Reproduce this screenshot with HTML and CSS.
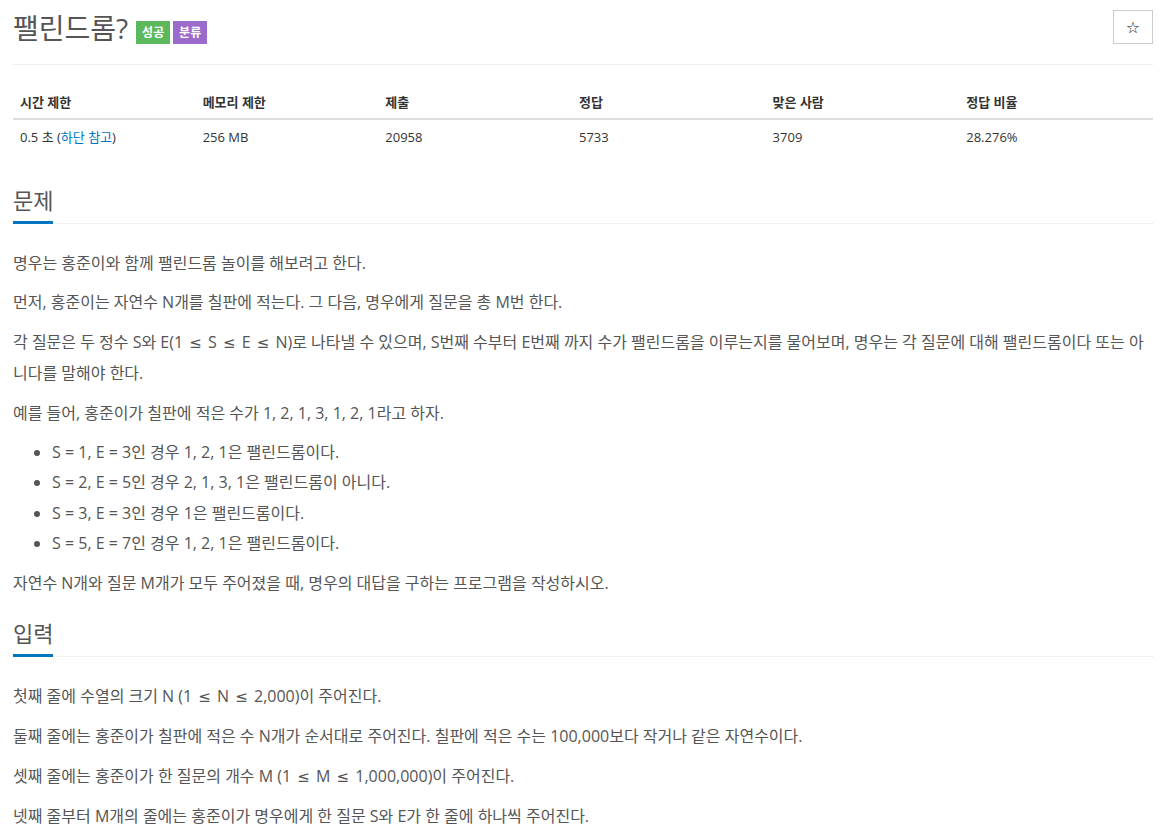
FILE: index.html
```html
<!DOCTYPE html>
<html lang="ko">
<head>
<meta charset="utf-8">
<link rel="stylesheet" href="styles.css">
</head>
<body>
<div class="page">
  <div class="page-header">
    <h1 class="title"><span class="title-text">팰린드롬?</span><span class="label label-success">성공</span><span class="label label-purple">분류</span></h1>
    <button class="star-btn" type="button">☆</button>
  </div>

  <table class="info">
    <colgroup>
      <col class="c-narrow"><col class="c-narrow"><col class="c-wide"><col class="c-wide"><col class="c-wide"><col class="c-wide">
    </colgroup>
    <thead>
      <tr><th>시간 제한</th><th>메모리 제한</th><th>제출</th><th>정답</th><th>맞은 사람</th><th>정답 비율</th></tr>
    </thead>
    <tbody>
      <tr><td>0.5 초 (<a href="#">하단 참고</a>)</td><td>256 MB</td><td>20958</td><td>5733</td><td>3709</td><td>28.276%</td></tr>
    </tbody>
  </table>

  <section class="problem">
    <div class="headline"><h2>문제</h2></div>
    <div class="text">
      <p>명우는 홍준이와 함께 팰린드롬 놀이를 해보려고 한다.</p>
      <p>먼저, 홍준이는 자연수 N개를 칠판에 적는다. 그 다음, 명우에게 질문을 총 M번 한다.</p>
      <p>각 질문은 두 정수 S와 E(1 <span class="le">≤</span> S <span class="le">≤</span> E <span class="le">≤</span> N)로 나타낼 수 있으며, S번째 수부터 E번째 까지 수가 팰린드롬을 이루는지를 물어보며, 명우는 각 질문에 대해 팰린드롬이다 또는 아니다를 말해야 한다.</p>
      <p>예를 들어, 홍준이가 칠판에 적은 수가 1, 2, 1, 3, 1, 2, 1라고 하자.</p>
      <ul>
        <li>S = 1, E = 3인 경우 1, 2, 1은 팰린드롬이다.</li>
        <li>S = 2, E = 5인 경우 2, 1, 3, 1은 팰린드롬이 아니다.</li>
        <li>S = 3, E = 3인 경우 1은 팰린드롬이다.</li>
        <li>S = 5, E = 7인 경우 1, 2, 1은 팰린드롬이다.</li>
      </ul>
      <p>자연수 N개와 질문 M개가 모두 주어졌을 때, 명우의 대답을 구하는 프로그램을 작성하시오.</p>
    </div>
  </section>

  <section class="problem">
    <div class="headline"><h2>입력</h2></div>
    <div class="text">
      <p>첫째 줄에 수열의 크기 N (1 <span class="le">≤</span> N <span class="le">≤</span> 2,000)이 주어진다.</p>
      <p>둘째 줄에는 홍준이가 칠판에 적은 수 N개가 순서대로 주어진다. 칠판에 적은 수는 100,000보다 작거나 같은 자연수이다.</p>
      <p>셋째 줄에는 홍준이가 한 질문의 개수 M (1 <span class="le">≤</span> M <span class="le">≤</span> 1,000,000)이 주어진다.</p>
      <p>넷째 줄부터 M개의 줄에는 홍준이가 명우에게 한 질문 S와 E가 한 줄에 하나씩 주어진다.</p>
    </div>
  </section>
</div>
</body>
</html>
```

FILE: styles.css
```css
html, body {
  margin: 0;
  padding: 0;
  background: #fff;
}
body {
  font-family: "Open Sans", "Noto Sans CJK KR", sans-serif;
  color: #333;
  font-size: 13px;
}
.page {
  padding: 0 13px;
}
.page-header {
  display: flex;
  justify-content: space-between;
  align-items: flex-start;
  padding-top: 10px;
  padding-bottom: 18px;
  border-bottom: 1px solid #eee;
}
.title {
  margin: 0;
  font-size: 28px;
  font-weight: 400;
  line-height: 36px;
  color: #555;
  display: flex;
  align-items: center;
}
.title-text {
  margin-right: 8px;
}
.label {
  display: inline-block;
  font-size: 12px;
  font-weight: 700;
  color: #fff;
  width: 34px;
  text-align: center;
  height: 23px;
  line-height: 23px;
  margin-top: 8px;
}
.label-success { background: #5cb85c; }
.label-purple { background: #9b6bcc; margin-left: 3px; }
.star-btn {
  width: 40px;
  height: 34px;
  border: 1px solid #ccc;
  background: #fff;
  font-size: 16px;
  color: #222;
  font-family: "DejaVu Sans", sans-serif;
  padding: 0;
  margin: 0;
}
.info {
  width: 100%;
  border-collapse: collapse;
  margin-top: 19px;
  margin-bottom: 32px;
}
.c-narrow { width: 183px; }
.c-wide { width: 194px; }
.info th, .info td {
  text-align: left;
  padding: 7px 7px;
  line-height: 18px;
  font-size: 13px;
}
.info th {
  font-weight: 700;
  border-bottom: 2px solid #ddd;
  padding-top: 9px;
}
.info td {
  padding-top: 8px;
}
.info td a {
  color: #0076c0;
  text-decoration: none;
}
.problem {
  margin-top: 20px;
}
.headline {
  border-bottom: 1px dotted #e5e5e5;
}
.headline h2 {
  display: inline-block;
  margin: 0 0 -1px;
  font-size: 22px;
  font-weight: 400;
  line-height: 30px;
  color: #555;
  padding-bottom: 6px;
  border-bottom: 3px solid #0076c0;
}
.text {
  padding-top: 24px;
  font-size: 16px;
  line-height: 30.4px;
  color: #555;
}
.text p {
  margin: 0 0 9px;
}
.text ul {
  margin: 0 0 9px;
  padding-left: 39px;
}
.le {
  font-family: "DejaVu Sans", sans-serif;
  font-size: 15px;
  margin: 0 2px;
}
```
